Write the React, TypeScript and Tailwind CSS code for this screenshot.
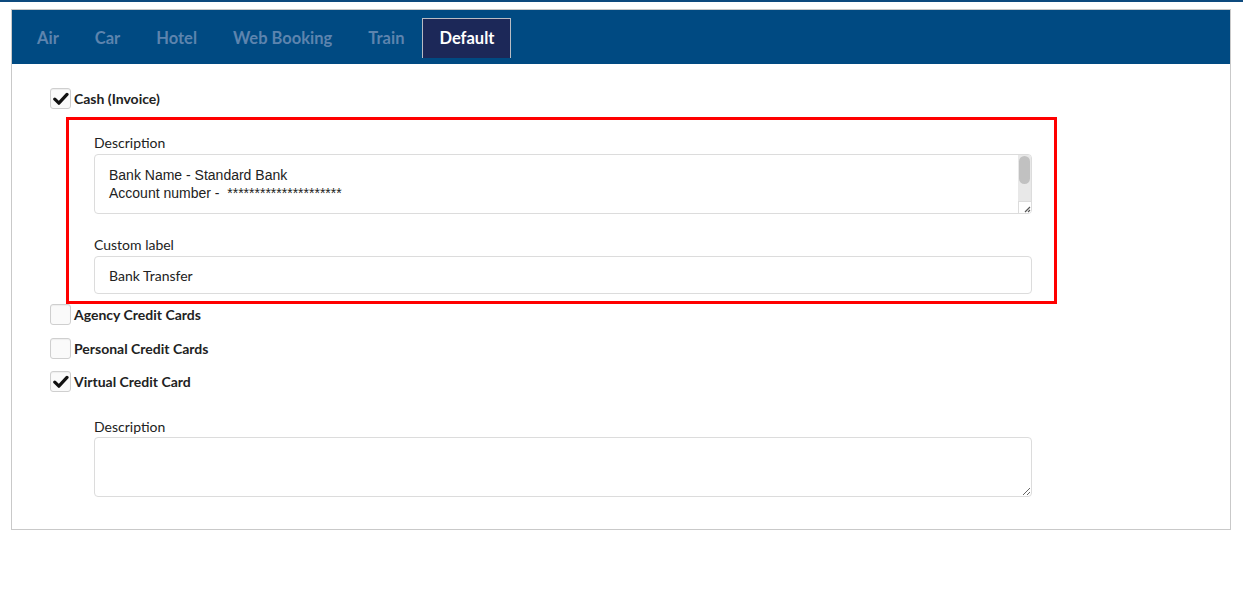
import React from 'react';

const tabs = ['Air', 'Car', 'Hotel', 'Web Booking', 'Train', 'Default'];

const Check: React.FC<{ checked?: boolean; label: string }> = ({ checked, label }) => (
  <label className="flex items-center h-[21px]">
    <span className="w-[21px] h-[21px] rounded-[3px] border border-[#cfcfcf] bg-[#fafafa] shadow-[inset_0_1px_1px_rgba(0,0,0,0.05)] flex items-center justify-center shrink-0">
      {checked && (
        <svg width="16" height="14" viewBox="0 0 16 14">
          <path d="M1.8 7.2 L5.9 11.2 L14 2.4" fill="none" stroke="#111" strokeWidth="3.2" strokeLinecap="round" strokeLinejoin="round" />
        </svg>
      )}
    </span>
    <span className="ml-[3px] text-[14px] font-bold text-[#222]">{label}</span>
  </label>
);

const App: React.FC = () => {
  return (
    <div className="w-[1243px] h-[595px] bg-white font-['Lato',sans-serif]">
      <div className="h-[2px] bg-[#0d4a7e]" />

      <div className="ml-[11px] mt-[7px] w-[1220px] border border-[#c9c9c9]">
        {/* Tab bar */}
        <div className="h-[54px] bg-[#004a82] flex items-start pt-[8px] pl-[7px]">
          {tabs.map((t) =>
            t === 'Default' ? (
              <div key={t} className="h-[40px] px-[16px] bg-[#1c2858] border border-b-0 border-[#b9bcc4] flex items-center text-[16.5px] font-bold text-white">
                {t}
              </div>
            ) : (
              <div key={t} className="h-[40px] px-[18px] flex items-center text-[16.5px] font-bold text-[#5d84ae]">
                {t}
              </div>
            )
          )}
        </div>

        {/* Payment options */}
        <div className="pt-[24px] pl-[38px] pb-[32px]">
          <Check checked label="Cash (Invoice)" />

          <div className="mt-[8px] ml-[16px] w-[991px] border-[3px] border-[#f00] pt-[14px] pl-[25px] pr-[22px] pb-[7px]">
            <div className="text-[14px] leading-[17px] text-[#222] mb-[3px]">Description</div>
            <div className="relative h-[60px] rounded-[4px] border border-[#dcdcdc] px-[14px] pt-[11px] font-['Liberation_Sans',Arial,sans-serif] text-[14px] leading-[18px] text-[#222] whitespace-pre overflow-hidden">
              {'Bank Name - Standard Bank\nAccount number -  *********************'}
              {/* scrollbar */}
              <div className="absolute top-0 right-0 bottom-0 w-[13px] bg-[#e8e8e8] flex flex-col">
                <div className="mt-[1px] mx-[1px] h-[28px] rounded-full bg-[#c1c1c1]" />
                <div className="flex-1" />
                <div className="h-[12px] bg-white border-l border-t border-[#dcdcdc] flex items-end justify-end">
                  <svg width="8" height="8" viewBox="0 0 8 8">
                    <path d="M7 2 L2 7 M7 5 L5 7" stroke="#555" strokeWidth="1.2" />
                  </svg>
                </div>
              </div>
            </div>
            <div className="mt-[22px] text-[14px] leading-[17px] text-[#222] mb-[3px]">Custom label</div>
            <div className="h-[38px] rounded-[4px] border border-[#dcdcdc] px-[14px] flex items-center text-[14px] text-[#222]">
              Bank Transfer
            </div>
          </div>

          <div className="mt-0 flex flex-col gap-[12.5px]">
            <Check label="Agency Credit Cards" />
            <Check label="Personal Credit Cards" />
            <Check checked label="Virtual Credit Card" />
          </div>

          <div className="ml-[44px] mt-[26px] w-[938px]">
            <div className="text-[14px] leading-[17px] text-[#222] mb-[2px]">Description</div>
            <textarea
              readOnly
              className="block w-full h-[60px] rounded-[4px] border border-[#dcdcdc] px-[14px] py-[10px] text-[14px] outline-none resize-y"
            />
          </div>
        </div>
      </div>
    </div>
  );
};

export default App;
